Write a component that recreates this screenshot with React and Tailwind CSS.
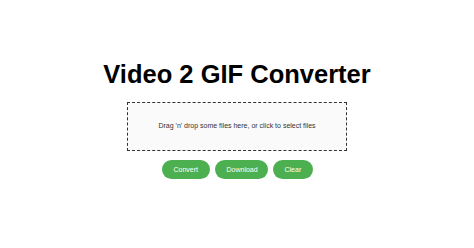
export default function App() {
  const btn =
    "h-[19px] rounded-full bg-[#4caf50] px-3 text-[7px] leading-none text-white";
  return (
    <div
      className="flex h-[248px] w-[474px] flex-col items-center bg-white pt-[62px]"
      style={{ fontFamily: '"Liberation Sans", Arial, sans-serif' }}
    >
      <h1 className="text-[25.5px] font-bold leading-none text-black">
        Video 2 GIF Converter
      </h1>
      <div className="mt-[14px] flex h-[49px] w-[220px] items-center justify-center border border-dashed border-[#333] bg-[#fafafa]">
        <p className="text-[7px] text-[#333]">
          Drag 'n' drop some files here, or click to select files
        </p>
      </div>
      <div className="mt-[9px] flex gap-[5px]">
        <button className={`${btn} w-[48px]`}>Convert</button>
        <button className={`${btn} w-[53px]`}>Download</button>
        <button className={`${btn} w-[40px]`}>Clear</button>
      </div>
    </div>
  );
}
